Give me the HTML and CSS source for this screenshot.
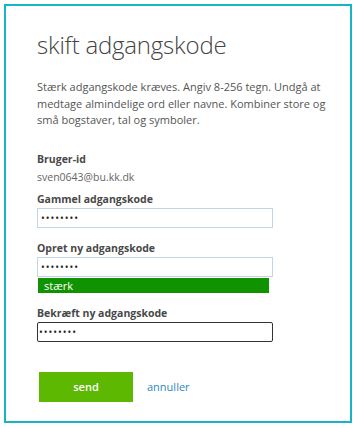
FILE: index.html
```html
<!DOCTYPE html>
<html lang="da">
<head>
  <meta charset="UTF-8" />
  <meta name="viewport" content="width=device-width, initial-scale=1" />
  <title>skift adgangskode</title>
  <link rel="stylesheet" href="styles.css">
</head>
<body>
  <div class="frame">
    <h1>skift adgangskode</h1>
    <p class="intro">Stærk adgangskode kræves. Angiv 8-256 tegn. Undgå at medtage almindelige ord eller navne. Kombiner store og små bogstaver, tal og symboler.</p>

    <div class="field first">
      <label>Bruger-id</label>
      <div class="user">sven0643@bu.kk.dk</div>
    </div>

    <div class="field after-user">
      <label>Gammel adgangskode</label>
      <div class="box">••••••••</div>
    </div>

    <div class="field">
      <label>Opret ny adgangskode</label>
      <div class="box">••••••••</div>
      <div class="strength">stærk</div>
    </div>

    <div class="field">
      <label>Bekræft ny adgangskode</label>
      <div class="box focus">••••••••</div>
    </div>

    <div class="actions">
      <button class="send">send</button>
      <a href="#" class="cancel">annuller</a>
    </div>
  </div>
</body>
</html>
```

FILE: styles.css
```css
body {
  margin: 0;
  background: #fff;
  font-family: 'Open Sans', sans-serif;
  color: #555;
}
.frame {
  margin: 4px;
  width: 348px;
  height: 419px;
  border: 2px solid #17b4c5;
  padding: 0 0 0 31px;
  box-sizing: border-box;
}
h1 {
  margin: 0;
  padding-top: 21px;
  font-size: 24px;
  font-weight: 300;
  color: #444;
  line-height: 36px;
  letter-spacing: -0.2px;
}
.intro {
  margin: 16px 0 0;
  width: 300px;
  font-size: 11px;
  line-height: 16.5px;
  color: #555;
}
.field {
  margin-top: 12px;
}
.field.first {
  margin-top: 22px;
}
.field.after-user {
  margin-top: 6px;
}
label {
  display: block;
  font-size: 10.5px;
  font-weight: 700;
  color: #484848;
  line-height: 16px;
}
.user {
  padding-top: 2px;
  font-size: 10.5px;
  color: #666;
  line-height: 16px;
}
.box {
  margin-top: 1px;
  width: 236px;
  height: 20px;
  box-sizing: border-box;
  border: 1px solid #c3d5e4;
  font-size: 10px;
  letter-spacing: 1px;
  line-height: 18px;
  padding-left: 3px;
  color: #222;
}
.box.focus {
  border-color: #333;
  border-radius: 2px;
  padding-left: 1px;
}
.strength {
  margin: 1px 0 0 1px;
  width: 231px;
  height: 15px;
  background: #119300;
  color: #fff;
  font-size: 11px;
  line-height: 15px;
  padding-left: 6px;
  box-sizing: border-box;
}
.actions {
  margin-top: 30px;
  display: flex;
  align-items: center;
  gap: 14px;
}
.send {
  margin-left: 2px;
  width: 94px;
  height: 30px;
  border: none;
  background: #5cb800;
  color: #fff;
  font-family: 'Open Sans', sans-serif;
  font-size: 11px;
  font-weight: 600;
}
.cancel {
  color: #2e86c1;
  text-decoration: none;
  font-size: 11px;
}
```
